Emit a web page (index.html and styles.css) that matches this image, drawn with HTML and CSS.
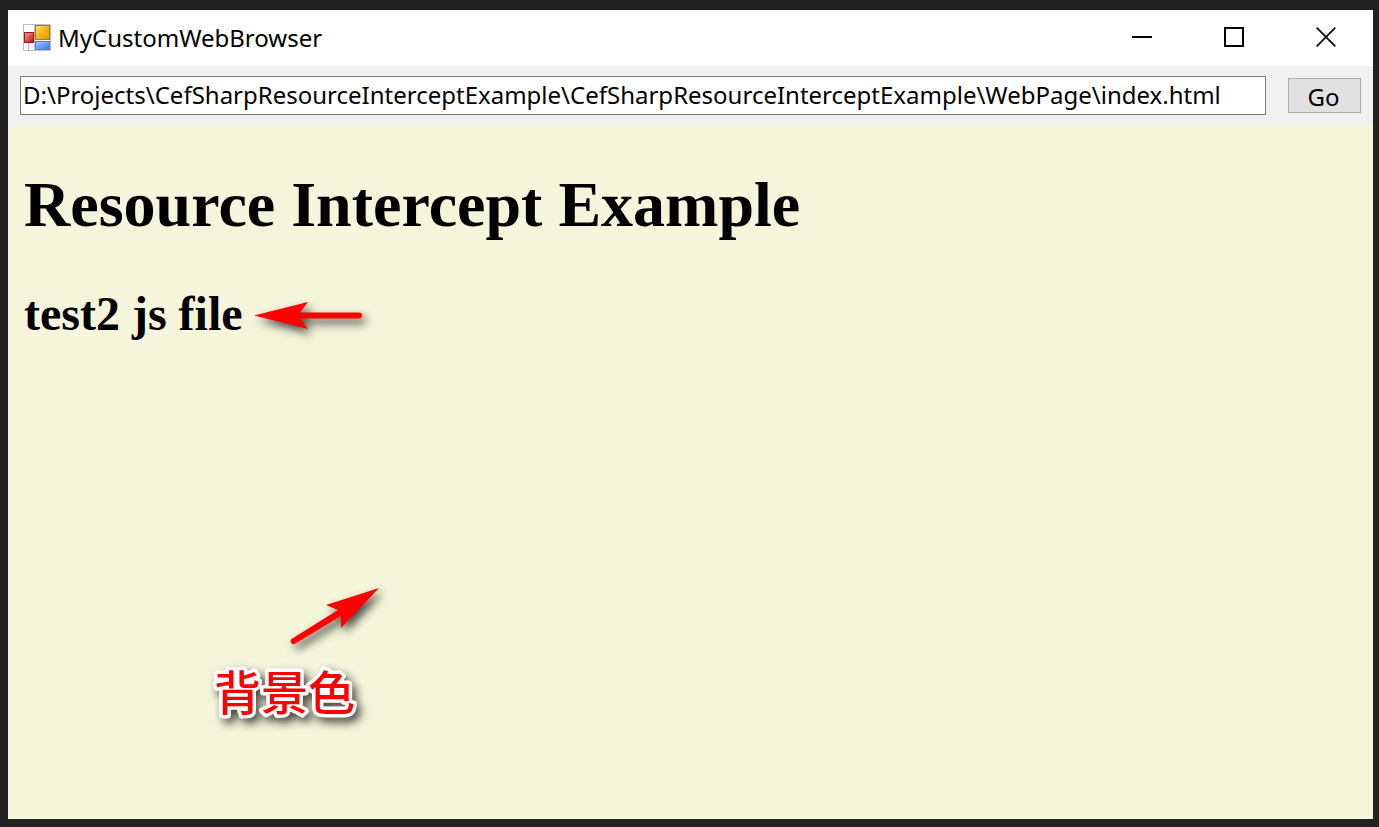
FILE: index.html
```
<!DOCTYPE html>
<html lang="en">
<head>
<meta charset="utf-8">
<title>MyCustomWebBrowser</title>
<link rel="stylesheet" href="styles.css">
</head>
<body>
<div class="window">
  <header class="titlebar">
    <svg class="app-icon" width="28" height="27" viewBox="0 0 28 27" aria-hidden="true">
      <defs>
        <linearGradient id="gold" x1="0" y1="0" x2="1" y2="1"><stop offset="0" stop-color="#ffe884"/><stop offset=".5" stop-color="#f0b51c"/><stop offset="1" stop-color="#e39b00"/></linearGradient>
        <linearGradient id="red" x1="0" y1="0" x2="1" y2="1"><stop offset="0" stop-color="#f4a49a"/><stop offset="1" stop-color="#bd0d0d"/></linearGradient>
        <linearGradient id="blue" x1="0" y1="0" x2="1" y2="1"><stop offset="0" stop-color="#a9c8ff"/><stop offset="1" stop-color="#3b74e8"/></linearGradient>
      </defs>
      <path d="M.5.5h27v26H.5zM5.500 19v7.500M11.500 0v27" fill="#fff" stroke="#bdbdbd"/>
      <rect x="12.500" y="1.500" width="14" height="14" fill="url(#gold)" stroke="#a87c0c"/>
      <rect x="1.500" y="8.500" width="9" height="10" fill="url(#red)" stroke="#a51616"/>
      <rect x="12.500" y="17.500" width="14" height="8" fill="url(#blue)" stroke="#5583cf"/>
    </svg>
    <span class="title">MyCustomWebBrowser</span>
    <div class="controls">
      <button class="control" type="button" aria-label="Minimize"><svg width="20" height="20" viewBox="0 0 20 20"><path d="M0 10h20" stroke="#000" stroke-width="2"/></svg></button>
      <button class="control" type="button" aria-label="Maximize"><svg width="20" height="20" viewBox="0 0 20 20"><path d="M1 1h18v18H1z" fill="none" stroke="#000" stroke-width="2"/></svg></button>
      <button class="control" type="button" aria-label="Close"><svg width="20" height="20" viewBox="0 0 20 20"><path d="M.7.7l18.600 18.600M19.300.7L.7 19.300" stroke="#111" stroke-width="1.900"/></svg></button>
    </div>
  </header>
  <form class="toolbar">
    <input class="address" type="text" aria-label="Address" value="D:\Projects\CefSharpResourceInterceptExample\CefSharpResourceInterceptExample\WebPage\index.html">
    <button class="go" type="button">Go</button>
  </form>
  <main class="page">
    <h1>Resource Intercept Example</h1>
    <h2>test2 js file</h2>
    <svg class="mark arrow-text" width="120" height="40" viewBox="0 0 120 40" aria-hidden="true">
      <path d="M1 15.500L55 2l-8 10.500h59a3 3 0 0 1 0 6H47L55 29z" fill="#f00"/>
    </svg>
    <svg class="mark arrow-background" width="110" height="70" viewBox="0 0 110 70" aria-hidden="true">
      <path d="M99 3L46 20l12 5L11.500 54a3 3 0 0 0 3 5L61 31l0 12z" fill="#f00"/>
    </svg>
    <svg class="mark note" width="160" height="64" viewBox="0 0 160 64" lang="zh-CN">
      <text x="8" y="47">背景色</text>
    </svg>
  </main>
</div>
</body>
</html>
```
FILE: styles.css
```
* {
  box-sizing: border-box;
}

body {
  margin: 0;
  min-height: 100vh;
  padding: 10px 6px 8px 8px;
  display: flex;
  background: #222;
}

.window {
  flex: 1;
  min-width: 0;
  display: flex;
  flex-direction: column;
  background: #f5f5dc;
  font: 24px "Noto Sans", sans-serif;
  color: #000;
}

.titlebar {
  height: 56px;
  flex: none;
  display: flex;
  align-items: center;
  padding: 0 1px 2px 15px;
  background: #fff;
}

.title {
  margin-left: 7px;
}

.controls {
  margin-left: auto;
  display: flex;
  align-self: stretch;
}

.control {
  width: 92px;
  padding: 0;
  border: 0;
  background: none;
  display: flex;
  align-items: center;
  justify-content: center;
}

.toolbar {
  flex: none;
  height: 59px;
  display: flex;
  align-items: center;
  gap: 22px;
  padding: 0 12px;
  background: #f0f0f0;
}

.address {
  flex: 1;
  min-width: 0;
  height: 39px;
  padding: 0 2px 2px;
  border: 1px solid #7a7a7a;
  border-radius: 0;
  background: #fff;
  font: inherit;
  color: inherit;
}

.go {
  width: 73px;
  height: 35px;
  padding: 0 2px 0 0;
  border: 1px solid #adadad;
  background: #e1e1e1;
  font: inherit;
  line-height: 35px;
  color: inherit;
}

.page {
  position: relative;
  flex: 1;
  padding: 43px 16px;
  background: #f5f5dc;
  font-family: "Liberation Serif", serif;
}

h1 {
  margin: 0 0 36px;
  font-size: 64px;
  line-height: 74px;
}

h2 {
  margin: 0;
  font-size: 48px;
  line-height: 72px;
}

.mark {
  position: absolute;
  overflow: visible;
  filter: drop-shadow(4px 5px 5px rgba(0, 0, 0, 0.7));
}

.arrow-text {
  left: 245px;
  top: 175px;
}

.arrow-background {
  left: 272px;
  top: 460px;
}

.note {
  left: 198px;
  top: 538px;
  font: 500 47px "Noto Sans CJK SC", sans-serif;
  fill: #f00;
  stroke: #fff;
  stroke-width: 7px;
  stroke-linejoin: round;
  paint-order: stroke;
}
```
